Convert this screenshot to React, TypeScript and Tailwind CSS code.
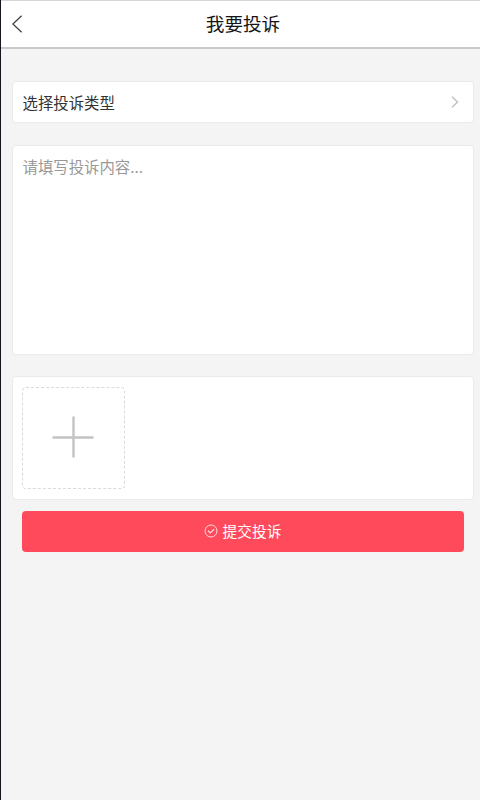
import React from "react";

function BackIcon() {
  return (
    <svg width="12" height="18" viewBox="0 0 12 18" fill="none" stroke="#3c3c3c" strokeWidth="1.2">
      <path d="M9.6 0.8 L0.9 9 L9.6 17.2" />
    </svg>
  );
}

function ChevronIcon() {
  return (
    <svg width="8" height="12" viewBox="0 0 8 12" fill="none" stroke="#c0c0c0" strokeWidth="1.4">
      <path d="M1 0.8 L6.5 6 L1 11.2" />
    </svg>
  );
}

function PlusIcon() {
  return (
    <svg width="42" height="42" viewBox="0 0 42 42" fill="none" stroke="#c3c3c3" strokeWidth="2.4" strokeLinecap="round">
      <path d="M21.5 1.4V40.6M1.4 21.5H40.6" />
    </svg>
  );
}

function CheckCircleIcon() {
  return (
    <svg width="14" height="14" viewBox="0 0 14 14" fill="none" stroke="#ffd9dd" strokeWidth="1">
      <circle cx="7" cy="7" r="6" />
      <path d="M4 6.7L6.3 8.9L10.1 5.2" strokeWidth="1.3" />
    </svg>
  );
}

const card = "rounded-[4px] border border-[#eaeaea] bg-white";

export default function App() {
  return (
    <div className="flex h-[800px] w-[480px] flex-col overflow-hidden border-l border-[#16151d] bg-[#f4f4f4] font-['Noto_Sans_CJK_SC',sans-serif]">
      <header className="grid h-[49px] shrink-0 grid-cols-[40px_1fr_40px] items-center border-t border-b-2 border-t-[#d6d6d6] border-b-[#c9c9c9] bg-white">
        <button className="flex pl-[11px]" aria-label="返回">
          <BackIcon />
        </button>
        <h1 className="pb-[2px] pl-[5px] text-center text-[18.6px] leading-[28px] text-[#151515]">我要投诉</h1>
      </header>
      <main className="flex flex-col pt-[32px] pr-[6px] pl-[11px]">
        <button className={`${card} flex h-[42px] items-center justify-between pr-[14px] pl-[9.5px]`}>
          <span className="text-[15.4px] leading-[24px] text-[#333333]">选择投诉类型</span>
          <ChevronIcon />
        </button>
        <textarea
          className={`${card} mt-[22px] block h-[210px] resize-none px-[9.5px] pt-[8px] text-[15.4px] leading-[24px] text-[#333333] outline-none placeholder:text-[#999999]`}
          placeholder="请填写投诉内容..."
        />
        <div className={`${card} mt-[21px] flex h-[124px] px-[9px] pt-[10px]`}>
          <button className="flex h-[102px] w-[103px] items-center justify-center rounded-[4px] border border-dashed border-[#dadada] pr-[2px] pb-[3px]" aria-label="添加图片">
            <PlusIcon />
          </button>
        </div>
        <button className="mx-[10px] mt-[11px] flex h-[41px] items-center justify-center gap-[5px] rounded-[4px] bg-[#ff4a5c] pr-px pb-px text-[14.7px] leading-[22px] text-white">
          <CheckCircleIcon />
          <span>提交投诉</span>
        </button>
      </main>
    </div>
  );
}
